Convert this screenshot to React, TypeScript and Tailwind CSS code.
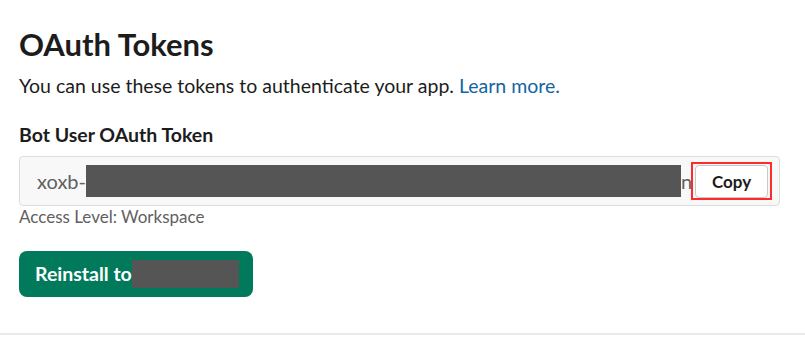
export default function App() {
  return (
    <div
      className="w-[805px] h-[348px] bg-white text-[#1d1c1d] overflow-hidden"
      style={{ fontFamily: 'Lato, "Liberation Sans", sans-serif' }}
    >
      <div className="pl-[19px] pr-[25px] pt-[24px] pb-[36px]">
        <h2 className="text-[31px] font-bold leading-[40px]">OAuth Tokens</h2>
        <p className="mt-[8px] text-[19.5px] leading-[28px]">
          You can use these tokens to authenticate your app.{' '}
          <span className="text-[#1264a3]">Learn more.</span>
        </p>
        <div className="mt-[22px] text-[19.5px] font-bold leading-[26px]">
          Bot User OAuth Token
        </div>
        <div className="mt-[8px] flex h-[50px] items-center rounded-[4px] border border-[#dddddd] bg-[#f8f8f8] pl-[17px] pr-[7px]">
          <div className="flex min-w-0 flex-1 items-center overflow-hidden whitespace-nowrap text-[20px] text-[#616061]">
            <span>xoxb-</span>
            <span className="h-[32px] w-[595px] shrink-0 bg-[#555555]" />
            <span>n/</span>
          </div>
          <div className="ml-[-2px] border-2 border-[#ff2b2b] px-[2px] pt-[1px]">
            <button className="flex h-[33px] w-[73px] items-center justify-center rounded-[4px] border border-[#c8c8c8] bg-white text-[17px] font-bold text-[#1d1c1d]">
              Copy
            </button>
          </div>
        </div>
        <div className="text-[17px] leading-[22px] text-[#616061]">
          Access Level: Workspace
        </div>
        <button className="mt-[23px] flex h-[46px] w-[234px] items-center rounded-[8px] bg-[#007a5a] pl-[16px] text-[19.5px] font-bold text-white">
          Reinstall to
          <span className="h-[28px] w-[107px] bg-[#555555]" />
        </button>
      </div>
      <div className="h-[2px] bg-[#ebebeb]" />
    </div>
  )
}
